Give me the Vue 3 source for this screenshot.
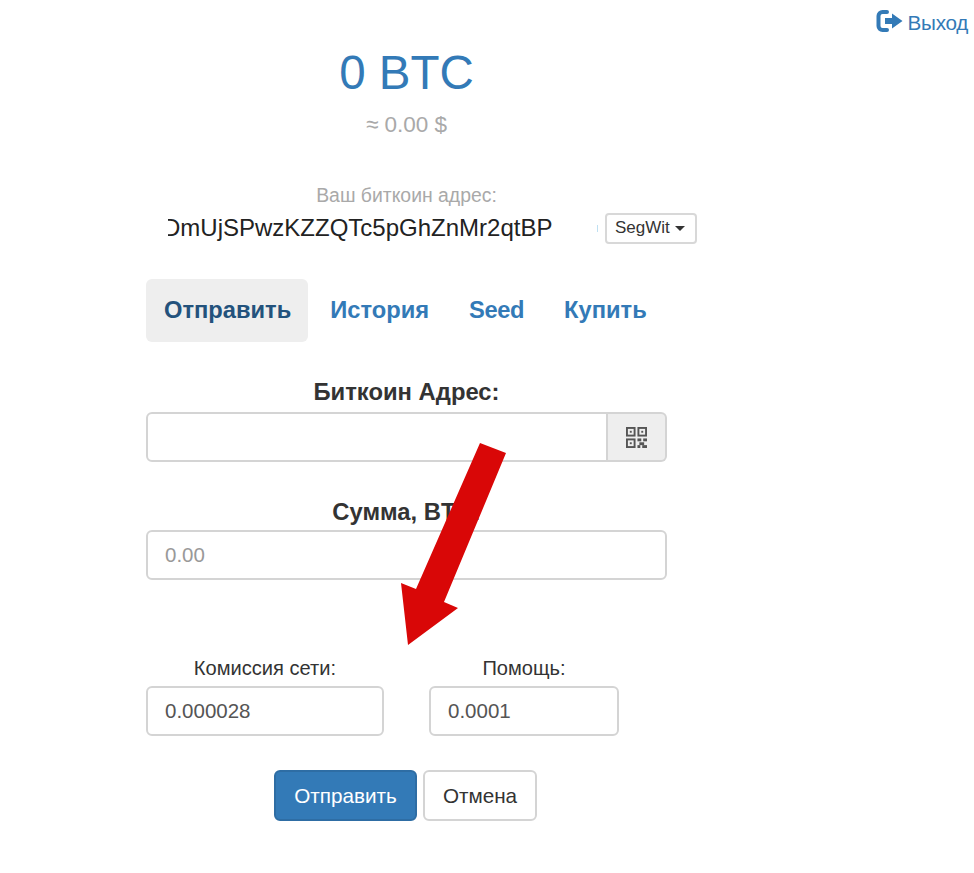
<script setup>
const tabs = [
  { label: 'Отправить', active: true },
  { label: 'История' },
  { label: 'Seed', tight: true },
  { label: 'Купить' }
]
</script>

<template>
  <div class="page">
    <header class="topbar">
      <a class="logout">
        <svg class="logout-icon" viewBox="0 0 28 24" aria-hidden="true">
          <path d="M11 3H6.500A4 4 0 0 0 2.500 7v10a4 4 0 0 0 4 4H11" fill="none" stroke="#337ab7" stroke-width="4" stroke-linecap="round" />
          <path d="M9 9h7V4.500l10.500 7.500L16 19.500V15H9z" fill="#337ab7" />
        </svg>
        <span>Выход</span>
      </a>
    </header>

    <main class="panel">
      <div class="balance">0 BTC</div>
      <div class="fiat">≈ 0.00 $</div>
      <div class="addr-label">Ваш биткоин адрес:</div>
      <div class="addr-row">
        <div class="addr-clip"><span>DmUjSPwzKZZQTc5pGhZnMr2qtBP</span></div>
        <i class="speck"></i>
        <button class="segwit">SegWit<i class="caret"></i></button>
      </div>

      <nav class="tabs">
        <a v-for="t in tabs" :key="t.label" class="tab" :class="{ active: t.active, tight: t.tight }">{{ t.label }}</a>
      </nav>

      <label class="field-label first">Биткоин Адрес:</label>
      <div class="group">
        <input class="input joined" type="text" />
        <span class="addon">
          <svg viewBox="0 0 22 22" width="21" height="21" aria-hidden="true">
            <g fill="none" stroke="#555" stroke-width="2">
              <rect x="1" y="1" width="8" height="8" />
              <rect x="13" y="1" width="8" height="8" />
              <rect x="1" y="13" width="8" height="8" />
            </g>
            <g fill="#555">
              <rect x="4" y="4" width="2" height="2" />
              <rect x="16" y="4" width="2" height="2" />
              <rect x="4" y="16" width="2" height="2" />
              <rect x="12" y="12" width="4" height="3" />
              <rect x="18" y="12" width="4" height="3" />
              <rect x="14" y="16" width="5" height="3" />
              <rect x="12" y="19" width="3" height="3" />
              <rect x="17" y="19" width="5" height="3" />
            </g>
          </svg>
        </span>
      </div>

      <label class="field-label second">Сумма, BTC:</label>
      <input class="input" type="text" placeholder="0.00" />

      <div class="fees">
        <div class="fee fee-net">
          <label>Комиссия сети:</label>
          <input class="input" type="text" value="0.000028" />
        </div>
        <div class="fee fee-help">
          <label>Помощь:</label>
          <input class="input" type="text" value="0.0001" />
        </div>
      </div>

      <div class="actions">
        <button class="btn primary">Отправить</button>
        <button class="btn">Отмена</button>
      </div>
    </main>

    <svg class="arrow" viewBox="0 0 974 873" aria-hidden="true">
      <polygon points="480,443 506,453 444,602 458,608 408,645 401,583 416,589" fill="#d90707" />
    </svg>
  </div>
</template>

<style scoped>
.page {
  position: relative;
  width: 974px;
  height: 873px;
  overflow: hidden;
  background: #fff;
  font-family: "Liberation Sans", Arial, sans-serif;
  color: #333;
}
.topbar {
  display: flex;
  justify-content: flex-end;
  height: 38px;
  padding: 9px 6px 0 0;
  box-sizing: border-box;
}
.logout {
  display: flex;
  align-items: center;
  gap: 4px;
  height: 28px;
  font-size: 20.700px;
  color: #337ab7;
  letter-spacing: -0.3px;
}
.logout-icon { width: 28px; height: 24px; margin-top: -4px; }
.panel {
  width: 521px;
  margin-left: 146px;
  display: flex;
  flex-direction: column;
}
.balance {
  margin-top: 7px;
  text-align: center;
  font-size: 47.500px;
  line-height: 56px;
  color: #337ab7;
}
.fiat {
  margin-top: 11px;
  text-align: center;
  font-size: 22.500px;
  line-height: 26px;
  color: #a9a9a9;
}
.addr-label {
  margin-top: 45px;
  text-align: center;
  font-size: 19.400px;
  line-height: 24px;
  color: #a9a9a9;
}
.addr-row {
  display: flex;
  align-items: center;
  height: 32px;
  margin-top: 5px;
}
.addr-clip {
  flex: none;
  width: 386px;
  margin-left: 22px;
  overflow: hidden;
  white-space: nowrap;
  font-size: 24px;
  line-height: 28px;
  color: #222;
}
.addr-clip span {
  display: block;
  margin-left: -5px;
}
.speck {
  flex: none;
  width: 1px;
  height: 7px;
  margin-left: 43px;
  background: #bfe0f2;
}
.segwit {
  flex: none;
  display: flex;
  align-items: center;
  gap: 5px;
  width: 92px;
  height: 31px;
  margin-left: 7px;
  padding: 0 0 0 8px;
  box-sizing: border-box;
  background: #fff;
  border: 2px solid #d8d8d8;
  border-radius: 4px;
  font: 17px "Liberation Sans", Arial, sans-serif;
  color: #333;
}
.caret {
  width: 0;
  height: 0;
  border-left: 5px solid transparent;
  border-right: 5px solid transparent;
  border-top: 5px solid #333;
}
.tabs {
  display: flex;
  gap: 4px;
  margin-top: 35px;
}
.tab {
  display: flex;
  align-items: center;
  height: 63px;
  padding: 0 18px;
  border-radius: 6px;
  font-size: 23.700px;
  font-weight: 700;
  color: #337ab7;
}
.tab.tight { letter-spacing: -0.4px; }
.tab.active {
  padding: 0 17px 0 18px;
  background: #eee;
  color: #23527c;
}
.field-label {
  display: block;
  text-align: center;
  font-size: 23.800px;
  font-weight: 700;
  line-height: 28px;
  color: #333;
}
.field-label.first { margin-top: 36px; margin-bottom: 6px; }
.field-label.second { margin-top: 36px; margin-bottom: 4px; }
.input {
  display: block;
  width: 100%;
  height: 50px;
  padding: 0 17px;
  box-sizing: border-box;
  background: #fff;
  border: 2px solid #d4d4d4;
  border-radius: 6px;
  font: 20.500px "Liberation Sans", Arial, sans-serif;
  color: #555;
  outline: none;
}
.input::placeholder { color: #999; }
.group { display: flex; }
.joined {
  flex: 1;
  min-width: 0;
  border-radius: 6px 0 0 6px;
}
.addon {
  display: flex;
  align-items: center;
  justify-content: center;
  width: 59px;
  height: 50px;
  box-sizing: border-box;
  background: #eee;
  border: 2px solid #d4d4d4;
  border-left: 0;
  border-radius: 0 6px 6px 0;
}
.fees {
  display: flex;
  gap: 45px;
  margin-top: 75px;
}
.fee label {
  display: block;
  text-align: center;
  font-size: 20.100px;
  line-height: 26px;
  margin-bottom: 5px;
  color: #333;
}
.fee-net { width: 238px; }
.fee-help { width: 190px; }
.actions {
  display: flex;
  gap: 6px;
  margin-top: 34px;
  margin-left: 128px;
}
.btn {
  height: 51px;
  width: 114px;
  box-sizing: border-box;
  background: #fff;
  border: 2px solid #d4d4d4;
  border-radius: 6px;
  font: 20.700px "Liberation Sans", Arial, sans-serif;
  color: #333;
}
.btn.primary {
  width: 143px;
  background: #337ab7;
  border-color: #2e6da4;
  color: #fff;
}
.arrow {
  position: absolute;
  inset: 0;
  width: 974px;
  height: 873px;
  pointer-events: none;
}
</style>
<style>
html, body { margin: 0; background: #fff; }
</style>
